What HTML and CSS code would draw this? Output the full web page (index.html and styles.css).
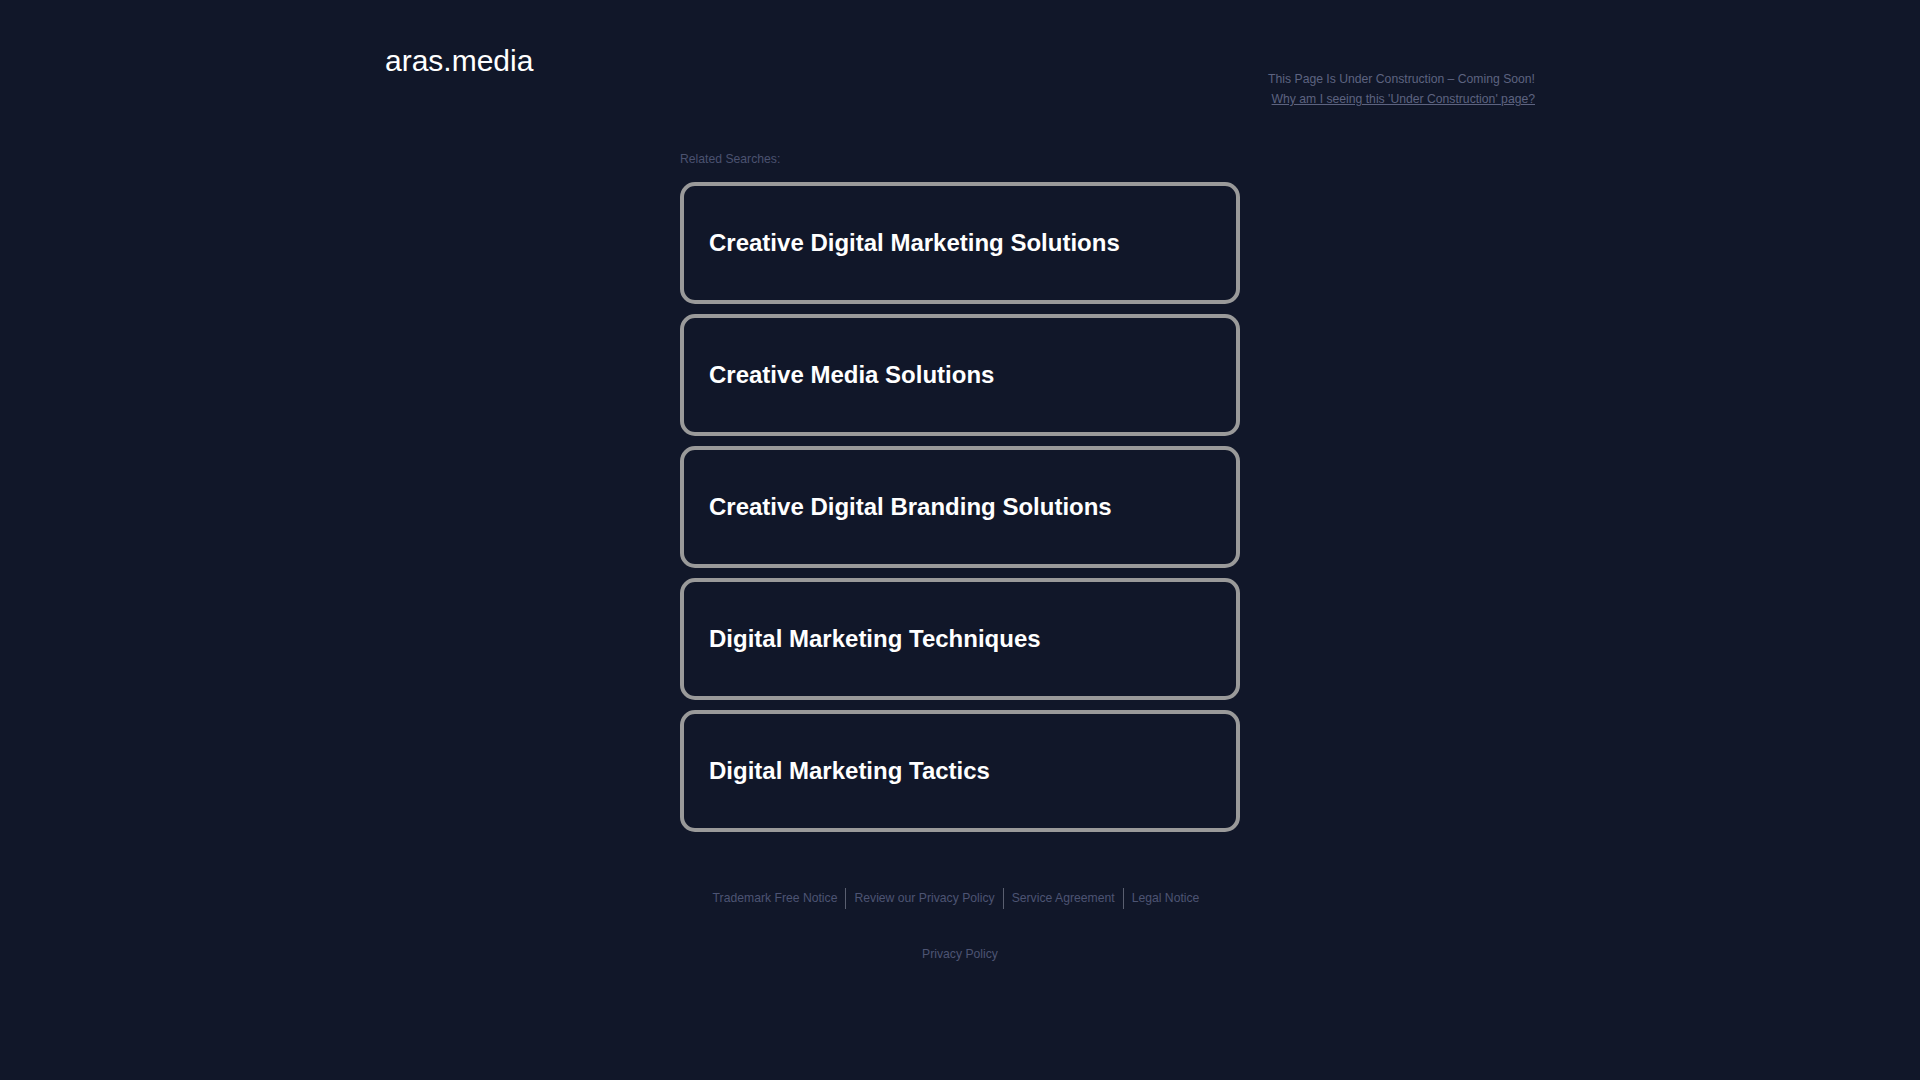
FILE: index.html
```html
<!DOCTYPE html>
<html lang="en">
<head>
<meta charset="utf-8">
<title>aras.media</title>
<link rel="stylesheet" href="styles.css">
</head>
<body>
<div class="page">
  <header class="header">
    <div class="domain">aras.media</div>
    <div class="notice">
      <div class="notice-line">This Page Is Under Construction – Coming Soon!</div>
      <div class="notice-line"><a class="notice-link" href="#">Why am I seeing this 'Under Construction' page?</a></div>
    </div>
  </header>
  <main class="searches">
    <div class="searches-title">Related Searches:</div>
    <a class="card" href="#">Creative Digital Marketing Solutions</a>
    <a class="card" href="#">Creative Media Solutions</a>
    <a class="card" href="#">Creative Digital Branding Solutions</a>
    <a class="card" href="#">Digital Marketing Techniques</a>
    <a class="card" href="#">Digital Marketing Tactics</a>
  </main>
  <footer class="footer">
    <nav class="footer-links">
      <a class="footer-link" href="#">Trademark Free Notice</a><a class="footer-link sep" href="#">Review our Privacy Policy</a><a class="footer-link sep" href="#">Service Agreement</a><a class="footer-link sep" href="#">Legal Notice</a>
    </nav>
    <div class="footer-privacy"><a class="footer-link" href="#">Privacy Policy</a></div>
  </footer>
</div>
</body>
</html>
```

FILE: styles.css
```css
html, body {
  margin: 0;
  padding: 0;
  background: #111729;
}
body {
  font-family: "Liberation Sans", Arial, sans-serif;
  min-height: 1080px;
}
.page {
  width: 1150px;
  margin: 0 auto;
}
.header {
  display: flex;
  justify-content: space-between;
  align-items: flex-start;
  padding-top: 43px;
}
.domain {
  font-size: 30px;
  color: #ffffff;
  line-height: 36px;
}
.notice {
  margin-top: 26px;
  text-align: right;
  font-size: 12.2px;
  line-height: 20px;
  color: #5d6380;
}
.notice-link {
  color: #5d6380;
  text-decoration: underline;
}
.searches {
  width: 560px;
  margin: 0 auto;
  padding-top: 43px;
  display: flex;
  flex-direction: column;
}
.searches-title {
  font-size: 12.2px;
  line-height: 14px;
  color: #4b5270;
  margin-bottom: 16px;
}
.card {
  box-sizing: border-box;
  height: 122px;
  margin-bottom: 10px;
  border: 4px solid #9a9a9a;
  border-radius: 15px;
  padding: 0 25px;
  display: flex;
  align-items: center;
  font-size: 24px;
  font-weight: bold;
  color: #ffffff;
  text-decoration: none;
}
.footer {
  padding-top: 46px;
  text-align: center;
}
.footer-links {
  display: flex;
  justify-content: center;
  padding-right: 8px;
}
.footer-link {
  display: inline-block;
  font-size: 12.2px;
  line-height: 21px;
  color: #4d5473;
  text-decoration: none;
  padding: 0 8px;
}
.footer-link.sep {
  border-left: 1px solid #5a5f70;
}
.footer-privacy {
  margin-top: 35px;
}
```
